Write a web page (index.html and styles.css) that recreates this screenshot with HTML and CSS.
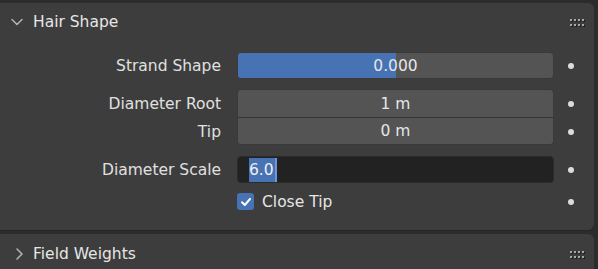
FILE: index.html
```html
<!DOCTYPE html>
<html>
<head>
<meta charset="utf-8">
<link rel="stylesheet" href="styles.css">
</head>
<body>
<div class="panel open">
  <div class="header">
    <svg class="chev" width="14" height="14" viewBox="0 0 14 14"><path d="M2 4.5 L7 9.5 L12 4.5" fill="none" stroke="#b4b4b4" stroke-width="1.5" stroke-linecap="round" stroke-linejoin="round"/></svg>
    <span class="title">Hair Shape</span>
    <span class="grip"><i></i><i></i><i></i><i></i><i></i><i></i><i></i><i></i></span>
  </div>
  <div class="body">
    <div class="row r1">
      <span class="label">Strand Shape</span>
      <div class="field slider"><div class="fill" style="width:50%"></div><span class="val">0.000</span></div>
      <span class="dot"></span>
    </div>
    <div class="row r2">
      <span class="label">Diameter Root</span>
      <div class="field top"><span class="val">1 m</span></div>
      <span class="dot"></span>
    </div>
    <div class="row r3">
      <span class="label">Tip</span>
      <div class="field bottom"><span class="val">0 m</span></div>
      <span class="dot"></span>
    </div>
    <div class="row r4">
      <span class="label">Diameter Scale</span>
      <div class="field edit"><span class="sel">6.0</span><span class="caret"></span></div>
      <span class="dot"></span>
    </div>
    <div class="row r5">
      <span class="label"></span>
      <div class="check">
        <span class="box"><svg width="12" height="12" viewBox="0 0 12 12"><path d="M2 6.2 L4.8 9 L10 3" fill="none" stroke="#fff" stroke-width="2" stroke-linecap="round" stroke-linejoin="round"/></svg></span>
        <span class="clabel">Close Tip</span>
      </div>
      <span class="dot"></span>
    </div>
  </div>
</div>
<div class="panel closed">
  <div class="header">
    <svg class="chev" width="14" height="14" viewBox="0 0 14 14"><path d="M5 2 L10 7 L5 12" fill="none" stroke="#b4b4b4" stroke-width="1.5" stroke-linecap="round" stroke-linejoin="round"/></svg>
    <span class="title">Field Weights</span>
    <span class="grip"><i></i><i></i><i></i><i></i><i></i><i></i><i></i><i></i></span>
  </div>
</div>
</body>
</html>
```

FILE: styles.css
```css
html, body {
  margin: 0;
  padding: 0;
  background: #2c2c2c;
  width: 598px;
  height: 269px;
  overflow: hidden;
  font-family: "DejaVu Sans", sans-serif;
  font-size: 15.5px;
  color: #e6e6e6;
}
.panel {
  width: 594px;
  background: #3d3d3d;
  border-radius: 0 6px 6px 0;
}
.panel.open {
  margin-top: 3px;
  height: 227px;
  box-shadow: 0 1px 0 #262626;
}
.panel.closed {
  margin-top: 4px;
  height: 40px;
}
.header {
  height: 37px;
  display: flex;
  align-items: center;
  padding-left: 10px;
  padding-top: 1px;
  box-sizing: border-box;
}
.panel.closed .header {
  height: 38px;
  padding-top: 2px;
}
.chev {
  flex: none;
  margin-right: 9px;
}
.panel.closed .chev {
  margin-left: 2px;
  margin-right: 7px;
}
.title {
  font-size: 15.5px;
  color: #e6e6e6;
  flex: 1;
}
.grip {
  display: grid;
  grid-template-columns: repeat(4, 2px);
  grid-auto-rows: 2px;
  column-gap: 2px;
  row-gap: 3px;
  margin-right: 10px;
  margin-top: 1px;
}
.grip i {
  width: 2px;
  height: 2px;
  background: #a8a8a8;
  box-shadow: 1px 1px 0 #1e1e1e;
}
.body {
  padding-top: 12px;
}
.row {
  display: flex;
  align-items: center;
  height: 27px;
}
.label {
  width: 237px;
  text-align: right;
  padding-right: 16px;
  box-sizing: border-box;
  color: #e0e0e0;
  flex: none;
}
.field {
  width: 317px;
  height: 27px;
  box-sizing: border-box;
  background: #545454;
  border-radius: 4px;
  position: relative;
  display: flex;
  align-items: center;
  justify-content: center;
  overflow: hidden;
  border: 1px solid #3a3a3a;
  flex: none;
}
.slider .fill {
  position: absolute;
  left: 0;
  top: 0;
  bottom: 0;
  background: #4772b3;
}
.val {
  position: relative;
  color: #e6e6e6;
}
.field.top {
  border-radius: 4px 4px 0 0;
  border-bottom: 1px solid #363636;
  height: 29px;
}
.field.bottom {
  border-radius: 0 0 4px 4px;
  border-top: none;
  height: 27px;
}
.field.edit {
  background: #222222;
  justify-content: flex-start;
  padding-left: 11px;
  border-color: #2a2a2a;
}
.sel {
  background: #4772b3;
  color: #f0f0f0;
  line-height: 24px;
  padding: 0 1px 0 0;
}
.caret {
  width: 2px;
  height: 24px;
  background: #6b98dc;
}
.dot {
  width: 6px;
  height: 6px;
  border-radius: 50%;
  background: #dcdcdc;
  margin-left: 14px;
  flex: none;
}
.r1 { margin-top: 0; }
.r2 { margin-top: 10px; height: 29px; }
.r3 { margin-top: 0; }
.r4 { margin-top: 11px; }
.r5 { margin-top: 5px; }
.check {
  width: 317px;
  display: flex;
  align-items: center;
  flex: none;
}
.box {
  width: 17px;
  height: 17px;
  border-radius: 3px;
  background: #4772b3;
  display: flex;
  align-items: center;
  justify-content: center;
}
.clabel {
  margin-left: 8px;
  color: #e6e6e6;
}
```
